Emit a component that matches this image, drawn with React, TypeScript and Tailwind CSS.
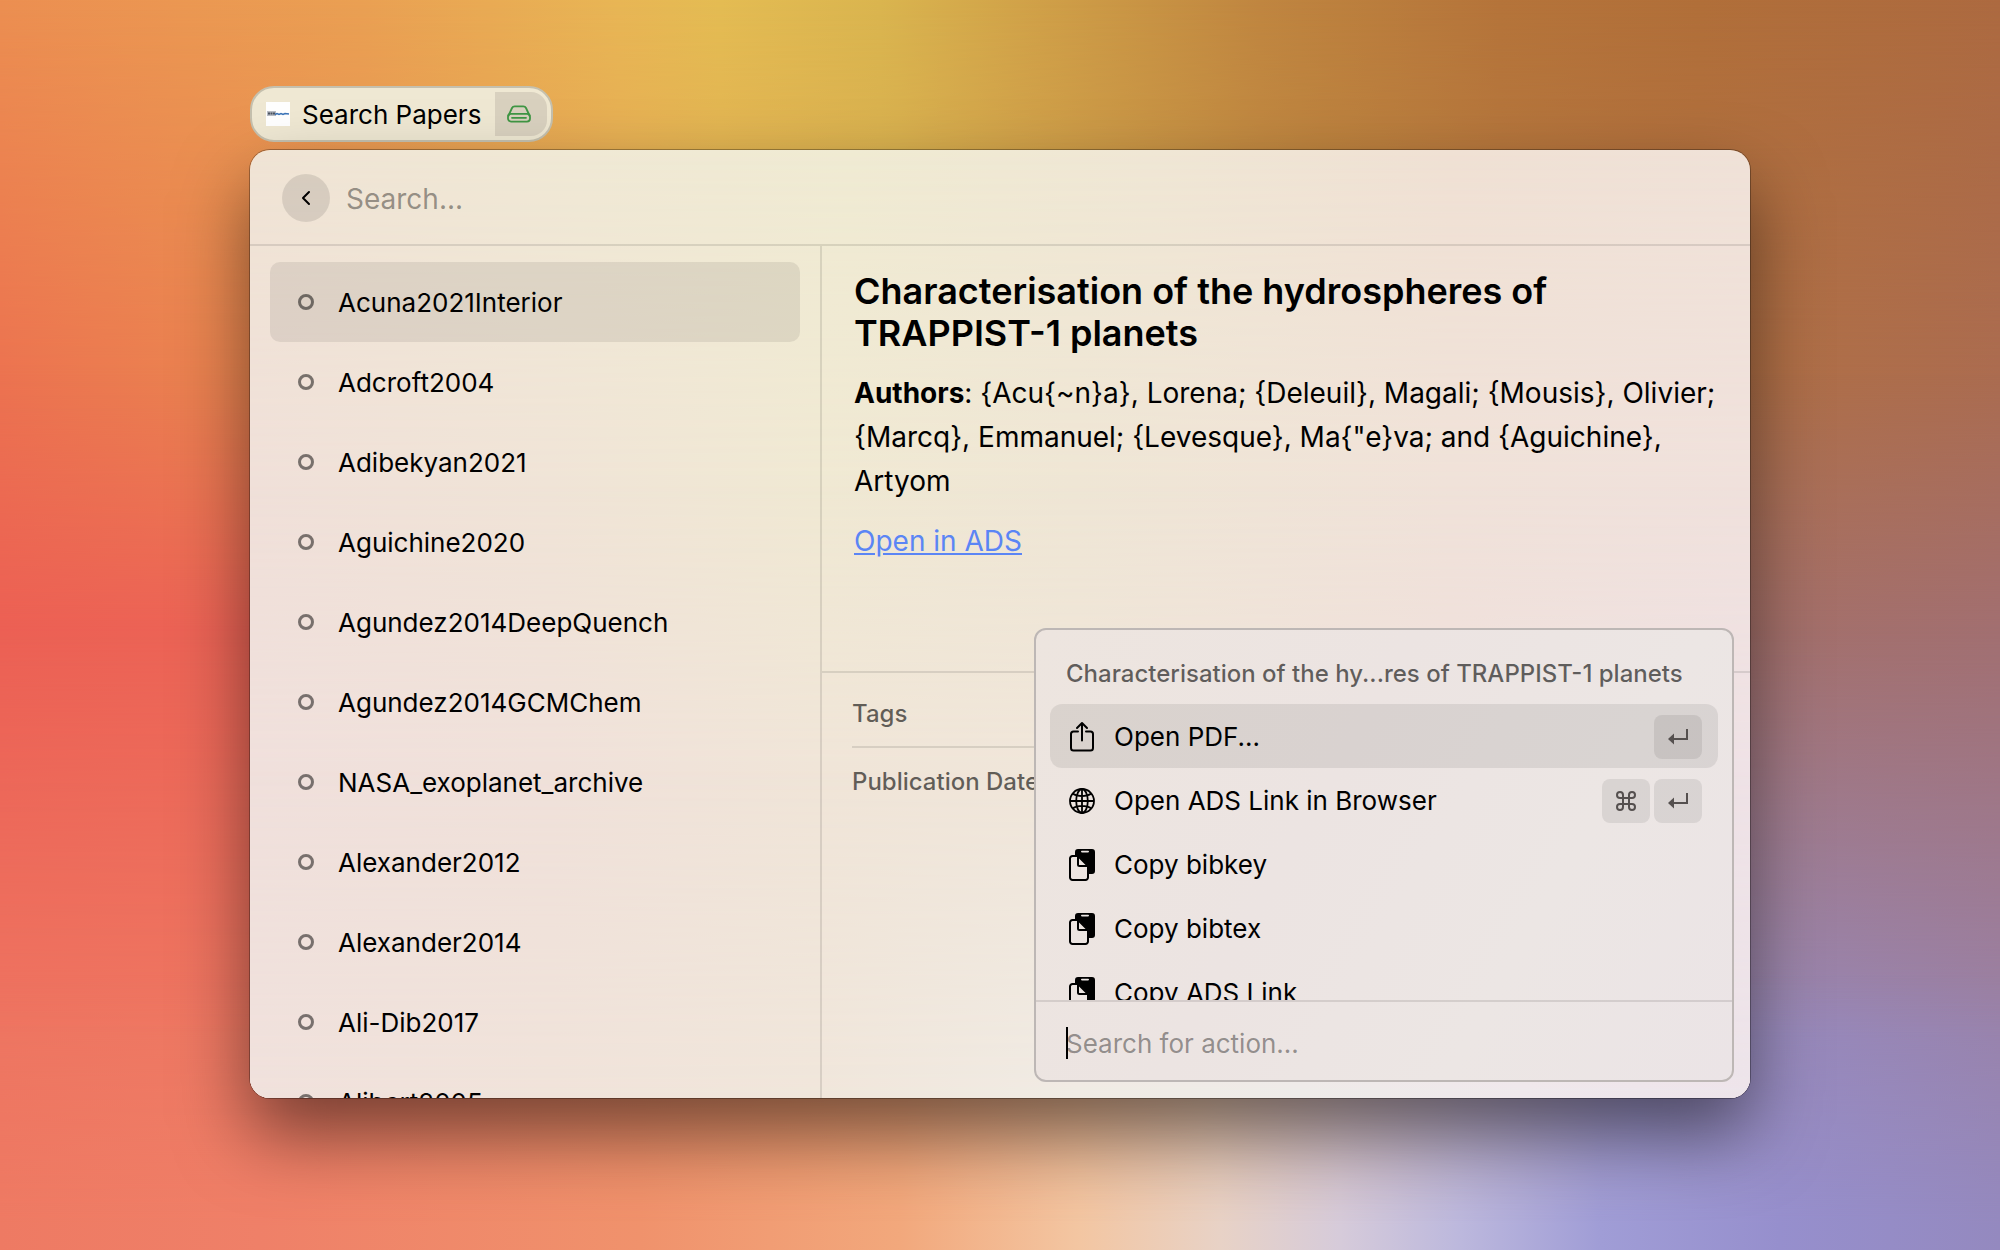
import { ChevronLeft } from "lucide-react";

const papers = [
  "Acuna2021Interior",
  "Adcroft2004",
  "Adibekyan2021",
  "Aguichine2020",
  "Agundez2014DeepQuench",
  "Agundez2014GCMChem",
  "NASA_exoplanet_archive",
  "Alexander2012",
  "Alexander2014",
  "Ali-Dib2017",
  "Alibert2005",
];

function DriveIcon() {
  return (
    <svg viewBox="0 0 24 18" className="h-[18px] w-6" fill="none" stroke="#3f9644" strokeWidth="1.800" strokeLinecap="round" strokeLinejoin="round" aria-hidden="true">
      <path d="M1.500 10.500 5 3a3 3 0 0 1 2.700-1.700h8.600A3 3 0 0 1 19 3l3.500 7.500" />
      <rect x="1" y="8.800" width="22" height="7.800" rx="3" />
      <path d="M5 12.800h14" />
    </svg>
  );
}

function ShareIcon() {
  return (
    <svg viewBox="0 0 28 32" className="h-8 w-7" fill="none" stroke="currentColor" strokeWidth="2" strokeLinecap="round" strokeLinejoin="round" aria-hidden="true">
      <path d="M10 10.500H5.500a2.500 2.500 0 0 0-2.500 2.500v14a2.500 2.500 0 0 0 2.500 2.500h17a2.500 2.500 0 0 0 2.500-2.500V13a2.500 2.500 0 0 0-2.500-2.500H18" />
      <path d="M14 19.500V2M9 7l5-5 5 5" />
    </svg>
  );
}

function GlobeIcon() {
  return (
    <svg viewBox="0 0 28 28" className="size-7" fill="none" stroke="currentColor" strokeWidth="1.800" aria-hidden="true">
      <circle cx="14" cy="14" r="12" />
      <ellipse cx="14" cy="14" rx="5.800" ry="12" />
      <path d="M14 2v24M2 14h24M4.500 6.500c5 3.500 14 3.500 19 0M4.500 21.500c5-3.500 14-3.500 19 0" />
    </svg>
  );
}

function CopyIcon() {
  return (
    <svg viewBox="0 0 28 32" className="h-8 w-7" aria-hidden="true">
      <path fill="currentColor" d="M7 7V3a3 3 0 0 1 3-3h14a3 3 0 0 1 3 3v19a3 3 0 0 1-3 3h-3.500V17L10.500 7z" />
      <rect x="13" y="1.800" width="8" height="1.600" rx="0.800" fill="#ece6e3" />
      <path fill="none" stroke="currentColor" strokeWidth="2" strokeLinejoin="round" d="M10 7H4.500A2.500 2.500 0 0 0 2 9.500v19A2.500 2.500 0 0 0 4.500 31h13a2.500 2.500 0 0 0 2.500-2.500V17L10 7v8.500a1.500 1.500 0 0 0 1.500 1.500H20" />
    </svg>
  );
}

function ReturnKey() {
  return (
    <kbd className="flex h-11 w-12 items-center justify-center rounded-lg bg-black/8">
      <svg viewBox="0 0 20 16" className="h-4 w-5" aria-hidden="true">
        <path d="M19 0v10H5" fill="none" stroke="#55504f" strokeWidth="2" />
        <path d="M6 4.500v11L0 10z" fill="#55504f" />
      </svg>
    </kbd>
  );
}

function CommandKey() {
  return (
    <kbd className="flex h-11 w-12 items-center justify-center rounded-lg bg-black/8">
      <svg viewBox="0 0 20 20" className="size-5" fill="none" stroke="#55504f" strokeWidth="2" aria-hidden="true">
        <path d="M7 7V4a3 3 0 1 0-3 3h12a3 3 0 1 0-3-3v12a3 3 0 1 0 3-3H4a3 3 0 1 0 3 3z" />
      </svg>
    </kbd>
  );
}

const actions = [
  { label: "Open PDF...", Icon: ShareIcon, keys: ["return"] },
  { label: "Open ADS Link in Browser", Icon: GlobeIcon, keys: ["command", "return"] },
  { label: "Copy bibkey", Icon: CopyIcon, keys: [] },
  { label: "Copy bibtex", Icon: CopyIcon, keys: [] },
  { label: "Copy ADS Link", Icon: CopyIcon, keys: [] },
];

function Wallpaper() {
  return (
    <div aria-hidden="true" className="absolute inset-0 -z-10">
      <div className="absolute inset-0 bg-[linear-gradient(90deg,#ec8f51_0%,#eaa053_18%,#e8b655_31%,#e4bc53_36%,#dab54f_44%,#d0a048_52%,#c08640_63%,#b5743a_75%,#b16f39_85%,#ad6a40_100%)]" />
      <div className="absolute inset-0 bg-[linear-gradient(90deg,#ec7350_0%,#e98950_15%,#e5a852_32%,#d9ad50_45%,#bd853f_66%,#b27142_82%,#ab6c50_100%)] mask-[linear-gradient(180deg,transparent_0%,black_30%)]" />
      <div className="absolute inset-0 bg-[linear-gradient(90deg,#ec6054_0%,#ec6556_15%,#e89a60_40%,#c89060_66%,#a57068_85%,#a26f70_100%)] mask-[linear-gradient(180deg,transparent_30%,black_50%)]" />
      <div className="absolute inset-0 bg-[linear-gradient(90deg,#ee7461_0%,#ee7862_15%,#ea9468_40%,#dfb090_60%,#9e92c0_82%,#9886b4_92%,#9a82a8_100%)] mask-[linear-gradient(180deg,transparent_50%,black_83%)]" />
      <div className="absolute inset-0 bg-[linear-gradient(90deg,#ee7a63_0%,#ef8068_13%,#f0926c_32%,#f2a87c_45%,#f3c6a2_54%,#e8d2c6_61%,#d6cbda_67%,#bcb8dd_73%,#a09dd6_80%,#968fcd_89%,#9489bf_100%)] mask-[linear-gradient(180deg,transparent_78%,black_98%)]" />
    </div>
  );
}

function Glass() {
  return (
    <div aria-hidden="true" className="absolute inset-0 -z-10">
      <div className="absolute inset-0 bg-[linear-gradient(90deg,#f0e4d5_0%,#f0e9d5_22%,#f0ebd3_40%,#f0e7d5_60%,#f0e1d4_80%,#f0e2d8_100%)]" />
      <div className="absolute inset-0 bg-[linear-gradient(90deg,#f0e0d9_0%,#f0e4d7_20%,#f0e9d3_38%,#efe6d5_55%,#f0e2d9_80%,#f0e1dc_100%)] mask-[linear-gradient(180deg,transparent_0%,black_35%)]" />
      <div className="absolute inset-0 bg-[linear-gradient(90deg,#f0e0dc_0%,#f0e1da_20%,#f0e5d8_38%,#f0e6da_55%,#f0e0dd_80%,#efe2e6_100%)] mask-[linear-gradient(180deg,transparent_35%,black_65%)]" />
      <div className="absolute inset-0 bg-[linear-gradient(90deg,#f0e1dc_0%,#f0e3da_20%,#f0e6db_38%,#f0ebe4_55%,#eeebe9_70%,#efe8ec_85%,#ede4ea_100%)] mask-[linear-gradient(180deg,transparent_65%,black_100%)]" />
    </div>
  );
}

export default function App() {
  return (
    <div className="relative isolate min-h-screen overflow-hidden px-[12.500%] pt-[86px] font-['Inter',sans-serif] text-[26px] leading-8 text-black">
      <Wallpaper />

      <div className="flex h-14 w-fit items-center rounded-3xl border-2 border-[#c5c0ae] bg-[#efe8d3] pr-1 pl-3.5">
        <svg viewBox="0 0 24 24" className="size-6 bg-white" aria-hidden="true">
          <rect x="1" y="9" width="9" height="5" fill="#b9bdc4" />
          <path d="M2 11.500h7" stroke="#4a5361" strokeWidth="2" strokeDasharray="2 0.500" />
          <path d="M9 12.500l2-1 2 1 2-1 2 1 2-1 4 .5" fill="none" stroke="#3b74b9" strokeWidth="1.500" />
        </svg>
        <span className="mr-3.5 ml-3 pt-0.5">Search Papers</span>
        <span className="flex h-11 w-[52px] items-center justify-center rounded-r-2xl bg-[#d9d1bf] pr-1">
          <DriveIcon />
        </span>
      </div>

      <main className="relative isolate mt-2 flex h-[948px] flex-col overflow-hidden rounded-[20px] shadow-[0_0_0_1px_rgba(0,0,0,0.3),0_36px_72px_rgba(0,0,0,0.5)]">
        <Glass />
        <header className="flex h-24 shrink-0 items-center border-b-2 border-black/10 px-8 pt-0.5">
          <button type="button" aria-label="Back" className="flex size-12 items-center justify-center rounded-full bg-black/10">
            <ChevronLeft className="size-6" />
          </button>
          <input aria-label="Search" placeholder="Search..." className="ml-4 min-w-0 flex-1 bg-transparent pt-0.5 text-[28px] outline-none placeholder:text-black/40" />
        </header>

        <div className="flex min-h-0 flex-1">
          <nav aria-label="Papers" className="w-[572px] shrink-0 overflow-hidden border-r-2 border-black/10 px-5 pt-4">
            <ul>
              {papers.map((paper, i) => (
                <li key={paper}>
                  <button type="button" className={`flex h-20 w-full items-center gap-6 rounded-[10px] px-7 text-left ${i === 0 ? "bg-black/8" : ""}`}>
                    <span className="size-4 rounded-full border-3 border-black/50" />
                    <span className="pt-0.5">{paper}</span>
                  </button>
                </li>
              ))}
            </ul>
          </nav>

          <section className="flex min-w-0 flex-1 flex-col">
            <article className="h-[427px] shrink-0 border-b-2 border-black/10 px-8 pt-6">
              <h1 className="text-[36px] leading-[42px] font-semibold">Characterisation of the hydrospheres of TRAPPIST-1 planets</h1>
              <p className="mt-[17px] text-[28px] leading-[44px]">
                <strong>Authors</strong>: {'{Acu{~n}a}, Lorena; {Deleuil}, Magali; {Mousis}, Olivier; {Marcq}, Emmanuel; {Levesque}, Ma{"e}va; and {Aguichine}, Artyom'}
              </p>
              <a href="#ads" className="mt-4 inline-block text-[28px] leading-[44px] text-[#5b85f5] underline">Open in ADS</a>
            </article>
            <dl className="px-[30px] text-[24px] font-medium text-black/60">
              <dt className="flex h-[75px] items-center border-b-2 border-black/10 pt-2">Tags</dt>
              <dt className="flex h-[68px] items-center">Publication Date</dt>
            </dl>
          </section>
        </div>

        <section aria-label="Actions" className="absolute right-4 bottom-4 flex h-[454px] w-[700px] flex-col overflow-hidden rounded-xl border-2 border-[#bdb7b5] bg-[linear-gradient(120deg,#ede5df,#ece4e2_40%,#ece6e4_70%,#ebe4e6)]">
          <h2 className="px-[30px] pt-7 pb-3.5 text-[24px] leading-8 font-medium whitespace-nowrap text-black/60">Characterisation of the hy...res of TRAPPIST-1 planets</h2>
          <ul className="min-h-0 flex-1 overflow-hidden px-3.5">
            {actions.map(({ label, Icon, keys }, i) => (
              <li key={label}>
                <button type="button" className={`flex h-16 w-full items-center gap-4 rounded-xl px-4 pt-0.5 text-left ${i === 0 ? "bg-black/8" : ""}`}>
                  <span className="flex w-8 justify-center">
                    <Icon />
                  </span>
                  <span className="flex-1">{label}</span>
                  <span className="flex gap-1">
                    {keys.map((key) => (key === "return" ? <ReturnKey key={key} /> : <CommandKey key={key} />))}
                  </span>
                </button>
              </li>
            ))}
          </ul>
          <div className="flex h-20 shrink-0 items-center border-t-2 border-black/10 px-[30px] pt-1">
            <span aria-hidden="true" className="-mr-0.5 h-8 w-0.5 bg-black" />
            <input aria-label="Search for action" placeholder="Search for action..." className="min-w-0 flex-1 bg-transparent pt-0.5 outline-none placeholder:text-black/40" />
          </div>
        </section>
      </main>
    </div>
  );
}
